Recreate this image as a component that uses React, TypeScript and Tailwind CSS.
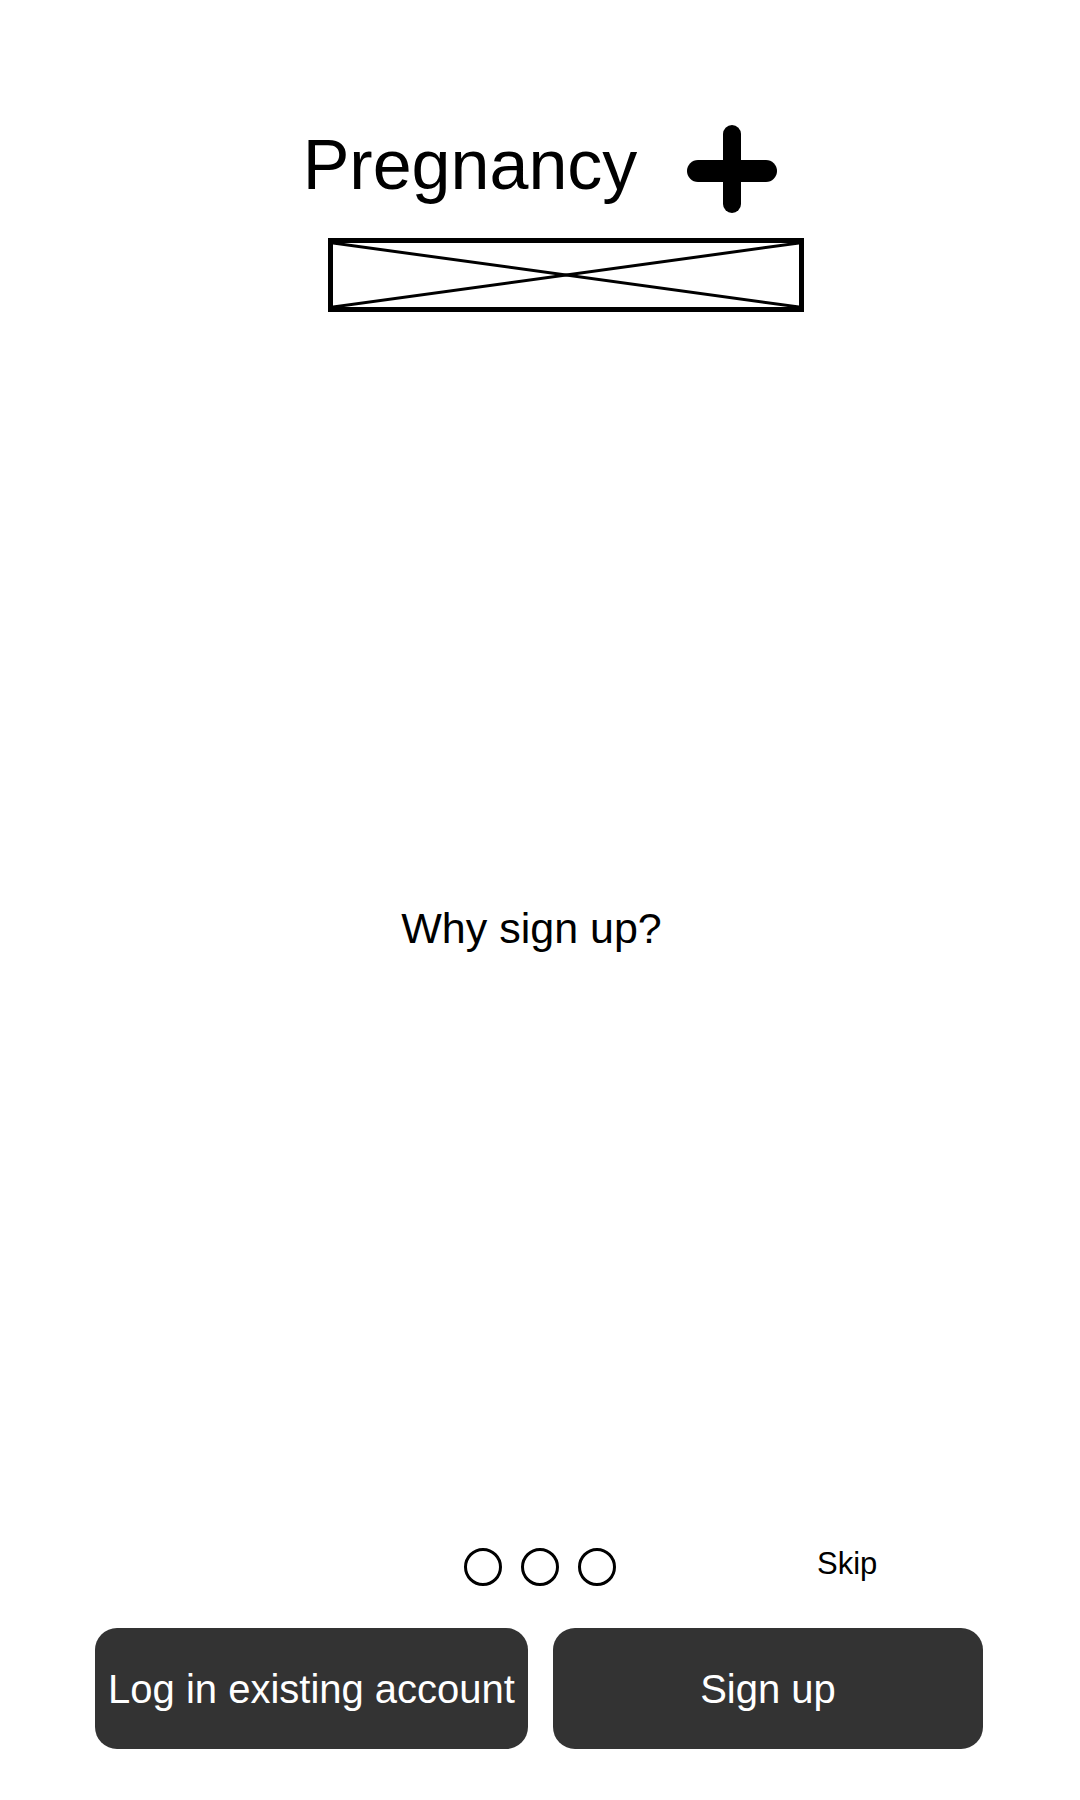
import React from "react";

function PlusMark() {
  return (
    <svg width="90" height="88" viewBox="0 0 90 88" className="mt-[-5px] shrink-0">
      <line x1="45" y1="9" x2="45" y2="79" stroke="#000" strokeWidth="18" strokeLinecap="round" />
      <line x1="11" y1="46" x2="79" y2="46" stroke="#000" strokeWidth="22" strokeLinecap="round" />
    </svg>
  );
}

function Placeholder() {
  return (
    <div className="relative w-[476px] h-[74px] border-[5px] border-black bg-white">
      <svg
        className="absolute inset-0 w-full h-full"
        viewBox="0 0 100 100"
        preserveAspectRatio="none"
      >
        <line x1="0" y1="0" x2="100" y2="100" stroke="#000" strokeWidth="3" vectorEffect="non-scaling-stroke" />
        <line x1="0" y1="100" x2="100" y2="0" stroke="#000" strokeWidth="3" vectorEffect="non-scaling-stroke" />
      </svg>
    </div>
  );
}

export default function App() {
  return (
    <div
      className="w-[1080px] h-[1800px] bg-white text-black flex flex-col"
      style={{ fontFamily: '"Liberation Sans", Arial, sans-serif' }}
    >
      <div className="pt-[130px] flex flex-row justify-center items-start gap-[50px]">
        <span className="text-[70px] leading-[70px]">Pregnancy</span>
        <PlusMark />
      </div>

      <div className="mt-[25px] pl-[328px] flex">
        <Placeholder />
      </div>

      <div className="mt-[595px] flex justify-center pr-[17px]">
        <span className="text-[43px] leading-[43px]">Why sign up?</span>
      </div>

      <div className="flex-1" />

      <div className="grid grid-cols-[1fr_auto_1fr] h-[38px] items-start">
        <div />
        <div className="flex gap-[19px]">
          <div className="w-[38px] h-[38px] rounded-full border-[3px] border-black" />
          <div className="w-[38px] h-[38px] rounded-full border-[3px] border-black" />
          <div className="w-[38px] h-[38px] rounded-full border-[3px] border-black" />
        </div>
        <div className="pl-[201px]">
          <span className="text-[31px] leading-[31px] block">Skip</span>
        </div>
      </div>

      <div className="mt-[42px] pb-[51px] pl-[95px] flex gap-[25px]">
        <div className="w-[433px] h-[121px] rounded-[22px] bg-[#333333] flex items-center justify-center">
          <span className="text-white text-[40px] leading-[40px] whitespace-nowrap">Log in existing account</span>
        </div>
        <div className="w-[430px] h-[121px] rounded-[22px] bg-[#333333] flex items-center justify-center">
          <span className="text-white text-[40px] leading-[40px] whitespace-nowrap">Sign up</span>
        </div>
      </div>
    </div>
  );
}
